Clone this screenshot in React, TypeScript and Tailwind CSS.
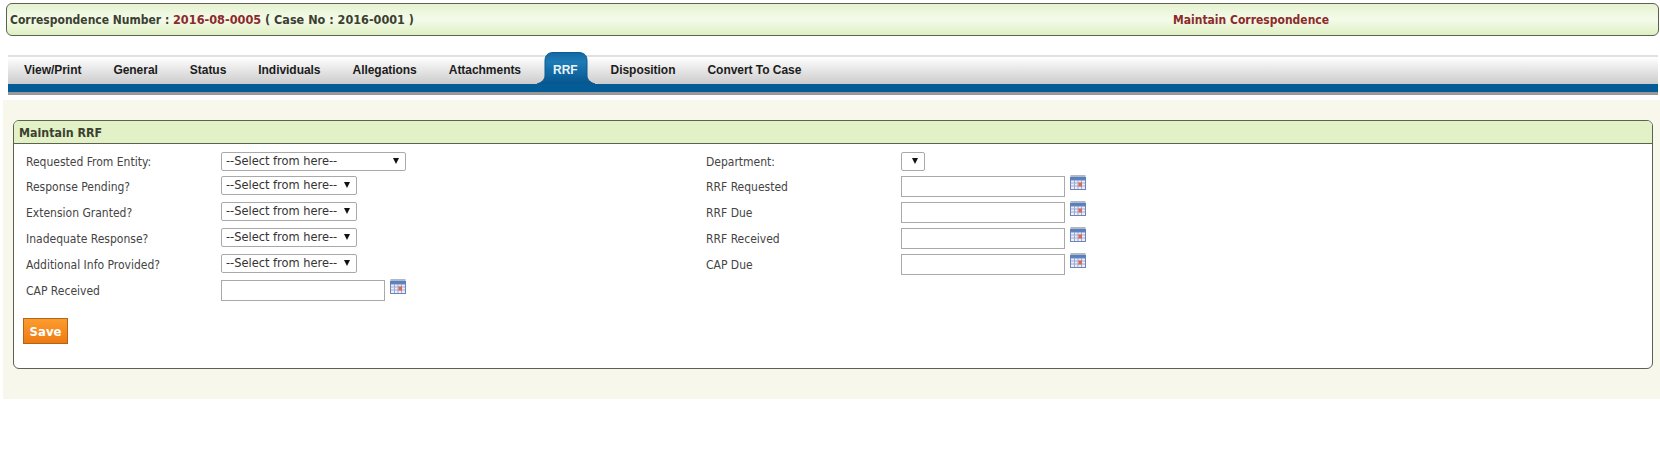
const tabs = ['View/Print', 'General', 'Status', 'Individuals', 'Allegations', 'Attachments', 'RRF', 'Disposition', 'Convert To Case'];

const sans = "font-['Liberation_Sans',Arial,sans-serif]";
const body = "font-['DejaVu_Sans_Condensed','DejaVu_Sans',Verdana,sans-serif]";

function CalendarIcon() {
  return (
    <svg width="16" height="16" viewBox="0 0 16 16" className="ml-[5px] -mt-[1px] shrink-0">
      <rect x="0.5" y="0" width="15" height="2" fill="#8a93a0" />
      <path d="M1 0v2M3 0v2M5 0v2M7 0v2M9 0v2M11 0v2M13 0v2M15 0v2" stroke="#eef0f5" strokeWidth="0.8" />
      <rect x="0" y="2" width="16" height="3" fill="#5580c4" />
      <rect x="0.5" y="5" width="15" height="9.5" fill="#eeeefa" stroke="#6c84b8" />
      <path d="M4.5 5v9M8 5v9M11.5 5v9M1 8h14M1 11h14" stroke="#9aa8d4" />
      <rect x="8.5" y="7.5" width="3.5" height="4" fill="#dc6a50" />
    </svg>
  );
}

function FakeSelect({ width, text }: { width: string; text?: string }) {
  return (
    <div className={`relative ${width}`}>
      <select className={`${body} block appearance-none w-full h-[19px] bg-white border border-[#a9a9a9] rounded-[2px] pl-[4px] text-[12.7px] leading-none text-[#333]`}>
        {text && <option>{text}</option>}
      </select>
      <svg width="6" height="6" viewBox="0 0 6 6" className="absolute right-[7px] top-[6px] pointer-events-none">
        <path d="M0 0h6L3 6z" fill="#111" />
      </svg>
    </div>
  );
}

function DateField() {
  return (
    <div className="flex items-start">
      <input className="w-[164px] h-[21px] bg-white border border-[#a9a9a9] outline-none" />
      <CalendarIcon />
    </div>
  );
}

function Row({ label, children, first }: { label: string; children: React.ReactNode; first?: boolean }) {
  return (
    <div className={`flex items-start ${first ? 'h-[24px]' : 'h-[26px]'}`}>
      <label className={`w-[195px] shrink-0 ${body} text-[12px] leading-[14px] text-[#444] ${first ? 'pt-[3px]' : 'pt-[4px]'}`}>{label}</label>
      {children}
    </div>
  );
}

export default function App() {
  return (
    <div className="min-h-[452px] bg-white pt-[3px]">
      <div className={`ml-[6px] mr-px h-[33px] border border-[#5c6152] rounded-[6px] bg-gradient-to-b from-[#e6f2d0] via-[#f4fbea] to-[#dff0c2] flex items-center pl-[3px] pt-[1px] ${body} font-bold text-[12px] text-[#3b4030]`}>
        <span className="w-[1163px] shrink-0">
          Correspondence Number : <span className="text-[12.6px] text-[#8c2a2a]">2016-08-0005</span> <span className="text-[12.5px]">( Case No : 2016-0001 )</span>
        </span>
        <span className="text-[#8c2a2a]">Maintain Correspondence</span>
      </div>

      <div className="mt-[19px] ml-[8px] mr-[2px]">
        <div className="h-[29px] border-t-2 border-[#e0e0e0] bg-gradient-to-b from-white to-[#cccccc] flex">
          {tabs.map((tab) => {
            const active = tab === 'RRF';
            return (
              <div
                key={tab}
                className={`relative h-[25px] px-[16px] flex items-center ${sans} font-bold text-[12px] tracking-[-0.04px] ${active ? 'mr-[1px] text-[#e8f4fc]' : 'text-[#1c1c1c]'}`}
              >
                {active && (
                  <svg width="58" height="32" viewBox="0 0 58 32" className="absolute left-[0px] top-[-5px]">
                    <defs>
                      <linearGradient id="rrfTab" x1="0" y1="0" x2="0" y2="1">
                        <stop offset="0" stopColor="#1168a3" />
                        <stop offset="0.3" stopColor="#1f7bb5" />
                        <stop offset="1" stopColor="#04558f" />
                      </linearGradient>
                    </defs>
                    <path d="M0 32C6 30 8 27 8 23V9C8 3 11 0.5 17 0.5H41C47 0.5 50 3 50 9V23C50 27 52 30 58 32Z" fill="url(#rrfTab)" stroke="#0b5a92" />
                  </svg>
                )}
                <span className="relative">{tab}</span>
              </div>
            );
          })}
        </div>
        <div className="h-[8px] bg-[#045c96]" />
        <div className="h-[3px] bg-[#999999]" />
      </div>

      <div className="mt-[5px] ml-[3px] h-[299px] bg-[#f7f7ec] pt-[20px] pl-[10px] pr-[7px]">
        <div className="h-[249px] border border-[#5c6152] rounded-[6px] bg-white overflow-hidden">
          <div className={`h-[23px] bg-[#e2f1c6] border-b border-[#5c6152] flex items-center pl-[5px] pt-[2px] ${body} font-bold text-[12.3px] text-[#3b4030]`}>
            Maintain RRF
          </div>
          <div className="pl-[12px] pt-[8px] flex">
            <div className="w-[680px] shrink-0">
              <Row label="Requested From Entity:" first><FakeSelect width="w-[185px]" text="--Select from here--" /></Row>
              <Row label="Response Pending?"><FakeSelect width="w-[136px]" text="--Select from here--" /></Row>
              <Row label="Extension Granted?"><FakeSelect width="w-[136px]" text="--Select from here--" /></Row>
              <Row label="Inadequate Response?"><FakeSelect width="w-[136px]" text="--Select from here--" /></Row>
              <Row label="Additional Info Provided?"><FakeSelect width="w-[136px]" text="--Select from here--" /></Row>
              <Row label="CAP Received"><DateField /></Row>
            </div>
            <div>
              <Row label="Department:" first><FakeSelect width="w-[24px]" /></Row>
              <Row label="RRF Requested"><DateField /></Row>
              <Row label="RRF Due"><DateField /></Row>
              <Row label="RRF Received"><DateField /></Row>
              <Row label="CAP Due"><DateField /></Row>
            </div>
          </div>
          <button className={`ml-[9px] mt-[12px] w-[45px] h-[26px] pt-[1px] border border-[#b0651c] bg-gradient-to-b from-[#fd9c2e] to-[#ef7a12] text-white font-bold text-[13px] ${body}`}>
            Save
          </button>
        </div>
      </div>
    </div>
  );
}
